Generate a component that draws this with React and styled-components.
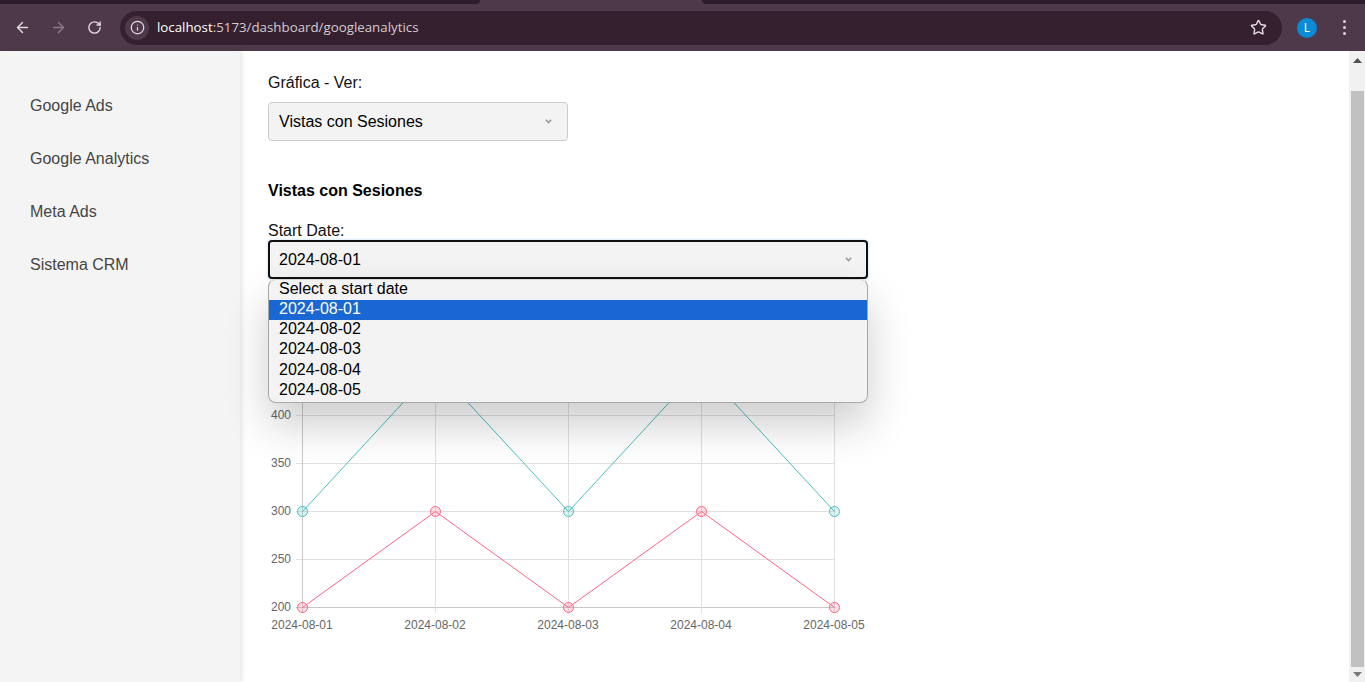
import React from "react";
import styled, { createGlobalStyle } from "styled-components";
import { ArrowLeft, ArrowRight, RotateCw, Info, Star } from "lucide-react";

const GlobalStyle = createGlobalStyle`
  html, body {
    margin: 0;
    height: 100%;
    overflow: hidden;
    background: #fff;
    font-family: "Liberation Sans", Arial, sans-serif;
  }
`;

const Page = styled.div`
  display: flex;
  flex-direction: column;
  width: 1365px;
  height: 682px;
  overflow: hidden;
`;

const TabStrip = styled.div`
  display: flex;
  height: 4px;
  background: #4d3949;
`;

const InactiveTabs = styled.div`
  flex: ${(p) => (p.$grow ? 1 : "none")};
  width: ${(p) => (p.$grow ? "auto" : "480px")};
  margin-right: ${(p) => (p.$grow ? "0" : "222px")};
  background: #2d1c2b;
  border-radius: ${(p) => (p.$grow ? "0 0 0 4px" : "0 0 4px 0")};
`;

const Toolbar = styled.div`
  display: flex;
  align-items: center;
  height: 47px;
  padding: 0 9px 0 4px;
  background: #4d3949;
  box-sizing: border-box;
`;

const NavButton = styled.div`
  width: 36px;
  height: 36px;
  display: flex;
  align-items: center;
  justify-content: center;
  color: ${(p) => (p.$off ? "#8b7a87" : "#e3dbe1")};
`;

const Omnibox = styled.div`
  flex: 1;
  display: flex;
  align-items: center;
  height: 34px;
  margin: 0 15px 0 8px;
  padding: 0 6px 0 5px;
  background: #34202f;
  border-radius: 17px;
`;

const InfoChip = styled.div`
  width: 24px;
  height: 24px;
  border-radius: 50%;
  background: #4d3949;
  color: #e3dbe1;
  display: flex;
  align-items: center;
  justify-content: center;
`;

const Url = styled.div`
  margin-left: 8px;
  margin-top: -1px;
  flex: 1;
  font-family: "Open Sans", Roboto, sans-serif;
  font-size: 13.3px;
  color: #d5cbd2;
  span {
    color: #fff;
  }
`;

const Avatar = styled.div`
  width: 20px;
  height: 20px;
  border-radius: 50%;
  margin: 0 15px 0 0;
  background: #0b8ad6;
  color: #fff;
  font-family: "Open Sans", sans-serif;
  font-size: 12px;
  display: flex;
  align-items: center;
  justify-content: center;
`;

const Dots = styled.div`
  width: 24px;
  display: flex;
  flex-direction: column;
  align-items: center;
  gap: 3px;
  i {
    width: 3px;
    height: 3px;
    border-radius: 50%;
    background: #e3d3e0;
  }
`;

const Body = styled.div`
  flex: 1;
  display: flex;
  min-height: 0;
`;

const Sidebar = styled.nav`
  width: 240px;
  flex-shrink: 0;
  box-sizing: border-box;
  padding: 46px 30px;
  background: #f4f4f4;
  box-shadow: 2px 0 5px rgba(0, 0, 0, 0.1);
  display: flex;
  flex-direction: column;
  gap: 35px;
`;

const NavItem = styled.div`
  font-size: 16px;
  line-height: 18px;
  color: #444;
`;

const Main = styled.main`
  flex: 1;
  padding: 23px 0 0 28px;
  min-width: 0;
`;

const Label = styled.div`
  font-size: 16px;
  line-height: 18px;
  color: #111;
`;

const Select = styled.div`
  position: relative;
  box-sizing: border-box;
  width: ${(p) => p.$w}px;
  height: 39px;
  display: flex;
  align-items: center;
  justify-content: space-between;
  padding: 0 15px 0 10px;
  background: #f3f3f3;
  font-size: 16px;
  color: #000;
  border-radius: 4px;
  border: ${(p) => (p.$focus ? "2px solid #101010" : "1px solid #ccc")};
  padding-left: ${(p) => (p.$focus ? "9px" : "10px")};
  padding-right: ${(p) => (p.$focus ? "14px" : "15px")};
  box-shadow: ${(p) => (p.$focus ? "0 0 0 1.5px #e6f2ff" : "none")};
  margin-top: ${(p) => (p.$focus ? "0" : "10px")};
`;

const Title = styled.h3`
  margin: 41px 0 22px;
  font-size: 16px;
  line-height: 18px;
  font-weight: 700;
  color: #000;
`;

const DateField = styled.div`
  position: relative;
  width: 600px;
`;

const Popup = styled.div`
  position: absolute;
  z-index: 2;
  left: 0;
  top: 39px;
  box-sizing: border-box;
  width: 600px;
  height: 124px;
  background: #f3f3f3;
  border: 1px solid #a8a8a8;
  border-top-color: #d8d8d8;
  border-radius: 8px;
  overflow: hidden;
  box-shadow: 0 22px 44px rgba(0, 0, 0, 0.2);
`;

const Option = styled.div`
  height: 20.17px;
  line-height: 18px;
  padding-left: 10px;
  font-size: 16px;
  color: ${(p) => (p.$active ? "#fff" : "#000")};
  background: ${(p) => (p.$active ? "#1967d2" : "transparent")};
`;

const ChartWrap = styled.div`
  margin: 11px 0 0 -28px;
  height: 360px;
`;

const ScrollBar = styled.div`
  width: 16px;
  flex-shrink: 0;
  display: flex;
  flex-direction: column;
  background: #f1f1f1;
`;

const ScrollArrow = styled.div`
  height: 40px;
  flex-shrink: 0;
  display: flex;
  justify-content: center;
  padding: 7px 0 0 1px;
  box-sizing: border-box;
  svg {
    display: block;
  }
`;

const ScrollThumb = styled.div`
  flex: 1;
  margin: 0 1px 0 2px;
  background: #c1c1c1;
`;

const ScrollEnd = styled.div`
  height: 15px;
  flex-shrink: 0;
  display: flex;
  align-items: center;
  justify-content: center;
  padding-left: 1px;
`;

const xs = [302, 435, 568, 701, 834];
const dates = ["2024-08-01", "2024-08-02", "2024-08-03", "2024-08-04", "2024-08-05"];
const ticks = [200, 250, 300, 350, 400];
const toY = (v) => 607 - ((v - 200) * 48) / 50;
const teal = [300, 450, 300, 450, 300];
const pink = [200, 300, 200, 300, 200];

// viewBox uses page coordinates, the svg starts at x 240 / y 290
const Chart = () => (
  <svg width="660" height="360" viewBox="240 290 660 360" style={{ display: "block" }}>
    {ticks.map((t) => (
      <g key={t}>
        <line x1="296" x2="834.5" y1={toY(t) + 0.5} y2={toY(t) + 0.5} stroke={t === 200 ? "#c8c8c8" : "#e0e0e0"} />
        <text x="291" y={toY(t) + 4} textAnchor="end" fontSize="12" fontFamily="Liberation Sans" fill="#666">
          {t}
        </text>
      </g>
    ))}
    {xs.map((x, i) => (
      <g key={x}>
        <line x1={x + 0.5} x2={x + 0.5} y1="300" y2="613" stroke={i === 0 ? "#c8c8c8" : "#e0e0e0"} />
        <text x={x} y="628.5" textAnchor="middle" fontSize="12" fontFamily="Liberation Sans" fill="#666">
          {dates[i]}
        </text>
      </g>
    ))}
    <polyline points={xs.map((x, i) => `${x + 0.5},${toY(teal[i]) + 0.5}`).join(" ")} fill="none" stroke="#4bc0c0" />
    <polyline points={xs.map((x, i) => `${x + 0.5},${toY(pink[i]) + 0.5}`).join(" ")} fill="none" stroke="#ff6384" />
    {xs.map((x, i) => (
      <circle key={x} cx={x + 0.5} cy={toY(teal[i]) + 0.5} r="5" fill="rgba(75,192,192,0.2)" stroke="#4bc0c0" />
    ))}
    {xs.map((x, i) => (
      <circle key={x} cx={x + 0.5} cy={toY(pink[i]) + 0.5} r="5" fill="rgba(255,99,132,0.2)" stroke="#ff6384" />
    ))}
  </svg>
);

const Chevron = () => (
  <svg width="7" height="5" viewBox="0 0 7 5">
    <path d="M0.8 0.8 L3.5 3.6 L6.2 0.8" fill="none" stroke="#999" strokeWidth="1.6" />
  </svg>
);

const options = ["Select a start date", ...dates];

export default function App() {
  return (
    <Page>
      <GlobalStyle />
      <TabStrip>
        <InactiveTabs />
        <InactiveTabs $grow />
      </TabStrip>
      <Toolbar>
        <NavButton><ArrowLeft size={17} /></NavButton>
        <NavButton $off><ArrowRight size={17} /></NavButton>
        <NavButton><RotateCw size={15} strokeWidth={2.2} /></NavButton>
        <Omnibox>
          <InfoChip><Info size={15} /></InfoChip>
          <Url><span>localhost</span>:5173/dashboard/googleanalytics</Url>
          <NavButton><Star size={17} /></NavButton>
        </Omnibox>
        <Avatar>L</Avatar>
        <Dots><i /><i /><i /></Dots>
      </Toolbar>
      <Body>
        <Sidebar>
          <NavItem>Google Ads</NavItem>
          <NavItem>Google Analytics</NavItem>
          <NavItem>Meta Ads</NavItem>
          <NavItem>Sistema CRM</NavItem>
        </Sidebar>
        <Main>
          <Label>Gráfica - Ver:</Label>
          <Select $w={300}>
            Vistas con Sesiones
            <Chevron />
          </Select>
          <Title>Vistas con Sesiones</Title>
          <Label>Start Date:</Label>
          <DateField>
            <Select $w={600} $focus>
              2024-08-01
              <Chevron />
            </Select>
            <Popup>
              {options.map((o, i) => (
                <Option key={o} $active={i === 1}>{o}</Option>
              ))}
            </Popup>
          </DateField>
          <ChartWrap>
            <Chart />
          </ChartWrap>
        </Main>
        <ScrollBar>
          <ScrollArrow>
            <svg width="9" height="5" viewBox="0 0 9 5"><path d="M4.5 0 L9 5 H0 Z" fill="#505050" /></svg>
          </ScrollArrow>
          <ScrollThumb />
          <ScrollEnd>
            <svg width="9" height="5" viewBox="0 0 9 5"><path d="M0 0 H9 L4.5 5 Z" fill="#7a7a7a" /></svg>
          </ScrollEnd>
        </ScrollBar>
      </Body>
    </Page>
  );
}
